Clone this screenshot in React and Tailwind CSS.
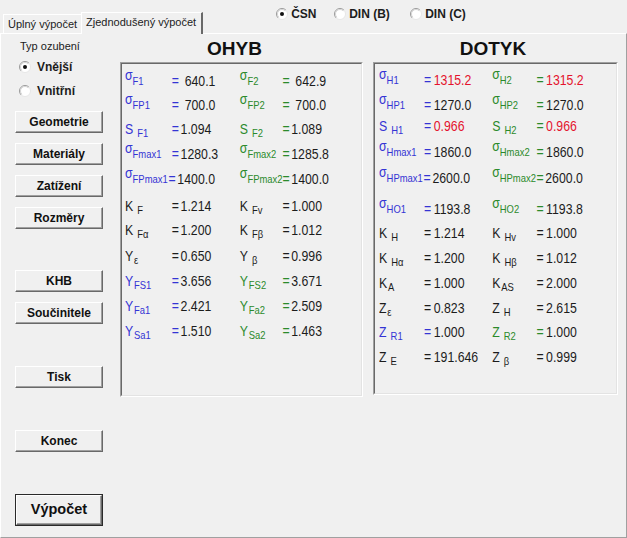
import React from "react";

const C = {
  b: "text-[#3434d4]",
  g: "text-[#2b8a2b]",
  k: "text-[#1c1c1c]",
  r: "text-[#e4132d]",
};

const L = (m, s, c, sp = true) => ({ m, s, c, sp });
const H = (l, e, v, vc = "k") => ({ l, e, v, vc });

const OHYB = [
  { mt: "", gap: "ml-[7px]", a: H(L("σ", "F1", "b"), "b", "640.1"), b: H(L("σ", "F2", "g"), "g", "642.9") },
  { mt: "mt-[4px]", gap: "ml-[7px]", a: H(L("σ", "FP1", "b"), "b", "700.0"), b: H(L("σ", "FP2", "g"), "g", "700.0") },
  { mt: "mt-[4px]", gap: "ml-[2px]", a: H(L("S", "F1", "b"), "b", "1.094"), b: H(L("S", "F2", "g"), "g", "1.089") },
  { mt: "mt-[5px]", gap: "ml-[2px]", a: H(L("σ", "Fmax1", "b"), "b", "1280.3"), b: H(L("σ", "Fmax2", "g"), "g", "1285.8") },
  { mt: "mt-[5px]", gap: "ml-[2px]", tight: true, a: H(L("σ", "FPmax1", "b"), "b", "1400.0"), b: H(L("σ", "FPmax2", "g"), "g", "1400.0") },
  { mt: "mt-[7px]", gap: "ml-[2px]", a: H(L("K", "F", "k"), "k", "1.214"), b: H(L("K", "Fv", "k"), "k", "1.000") },
  { mt: "mt-[4px]", gap: "ml-[2px]", a: H(L("K", "Fα", "k"), "k", "1.200"), b: H(L("K", "Fβ", "k"), "k", "1.012") },
  { mt: "mt-[6px]", gap: "ml-[2px]", a: H(L("Y", "ε", "k", false), "k", "0.650"), b: H(L("Y", "β", "k"), "k", "0.996") },
  { mt: "mt-[5px]", gap: "ml-[2px]", a: H(L("Y", "FS1", "b", false), "b", "3.656"), b: H(L("Y", "FS2", "g", false), "g", "3.671") },
  { mt: "mt-[5px]", gap: "ml-[2px]", a: H(L("Y", "Fa1", "b", false), "b", "2.421"), b: H(L("Y", "Fa2", "g", false), "g", "2.509") },
  { mt: "mt-[5px]", gap: "ml-[2px]", a: H(L("Y", "Sa1", "b", false), "b", "1.510"), b: H(L("Y", "Sa2", "g", false), "g", "1.463") },
];

const DOTYK = [
  { mt: "", gap: "ml-[3px]", a: H(L("σ", "H1", "b"), "b", "1315.2", "r"), b: H(L("σ", "H2", "g"), "g", "1315.2", "r") },
  { mt: "mt-[5px]", gap: "ml-[3px]", a: H(L("σ", "HP1", "b"), "b", "1270.0"), b: H(L("σ", "HP2", "g"), "g", "1270.0") },
  { mt: "mt-[1px]", gap: "ml-[3px]", a: H(L("S", "H1", "b"), "b", "0.966", "r"), b: H(L("S", "H2", "g"), "g", "0.966", "r") },
  { mt: "mt-[6px]", gap: "ml-[3px]", a: H(L("σ", "Hmax1", "b"), "b", "1860.0"), b: H(L("σ", "Hmax2", "g"), "g", "1860.0") },
  { mt: "mt-[6px]", gap: "ml-[2px]", tight: true, a: H(L("σ", "HPmax1", "b"), "b", "2600.0"), b: H(L("σ", "HPmax2", "g"), "g", "2600.0") },
  { mt: "mt-[11px]", gap: "ml-[3px]", a: H(L("σ", "HO1", "b"), "b", "1193.8"), b: H(L("σ", "HO2", "g"), "g", "1193.8") },
  { mt: "mt-[4px]", gap: "ml-[3px]", a: H(L("K", "H", "k"), "k", "1.214"), b: H(L("K", "Hv", "k"), "k", "1.000") },
  { mt: "mt-[5px]", gap: "ml-[3px]", a: H(L("K", "Hα", "k"), "k", "1.200"), b: H(L("K", "Hβ", "k"), "k", "1.012") },
  { mt: "mt-[5px]", gap: "ml-[3px]", a: H(L("K", "A", "k", false), "k", "1.000"), b: H(L("K", "AS", "k", false), "k", "2.000") },
  { mt: "mt-[5px]", gap: "ml-[3px]", a: H(L("Z", "ε", "k", false), "k", "0.823"), b: H(L("Z", "H", "k"), "k", "2.615") },
  { mt: "mt-[4px]", gap: "ml-[3px]", a: H(L("Z", "R1", "b"), "b", "1.000"), b: H(L("Z", "R2", "g"), "g", "1.000") },
  { mt: "mt-[5px]", gap: "ml-[3px]", a: H(L("Z", "E", "k"), "k", "191.646"), b: H(L("Z", "β", "k"), "k", "0.999") },
];

function Label({ l }) {
  if (l.m === "σ") {
    return (
      <span className={`whitespace-nowrap ${C[l.c]}`}>
        <span className="relative top-[-6px]">σ</span>
        <span className="relative top-[-1px] text-[11.5px]">{l.s}</span>
      </span>
    );
  }
  return (
    <span className={`whitespace-nowrap ${C[l.c]}`}>
      <span>{l.m}</span>
      <span className={`relative top-[3px] text-[11.5px] ${l.sp ? "ml-[5px]" : "ml-[1px]"}`}>{l.s}</span>
    </span>
  );
}

function Half({ h, lw, w, gap }) {
  return (
    <div className={`flex shrink-0 ${w}`}>
      <div className={`shrink-0 ${lw}`}>
        <Label l={h.l} />
      </div>
      <div className="whitespace-nowrap">
        <span className={C[h.e]}>=</span>
        <span className={`${gap} ${C[h.vc]}`}>{h.v}</span>
      </div>
    </div>
  );
}

function Panel({ rows, pad, lw1, w1, lw2, h, pt }) {
  return (
    <div className={`border border-t-[#a0a0a0] border-l-[#a0a0a0] border-r-white border-b-white ${h}`}>
      <div
        className={`h-full border border-t-[#696969] border-l-[#696969] border-r-[#e3e3e3] border-b-[#e3e3e3] ${pad} ${pt}`}
      >
        <div className="origin-left scale-x-[0.82] font-['Liberation_Sans',Arial,sans-serif] text-[15px] leading-[20px]">
          {rows.map((r, i) => (
            <div key={i} className={`flex h-[20px] ${r.mt}`}>
              <Half h={r.a} lw={r.tight ? "min-w-0 pr-[1px]" : lw1} w={w1} gap={r.gap} />
              <Half h={r.b} lw={lw2} w="w-[134px]" gap={r.gap} />
            </div>
          ))}
        </div>
      </div>
    </div>
  );
}

function Radio({ on }) {
  return (
    <svg width="12" height="12" viewBox="0 0 12 12" className="shrink-0">
      <circle cx="6" cy="6" r="5.5" fill="#ffffff" />
      <path d="M2.1 9.9 A5.5 5.5 0 0 1 9.9 2.1" fill="none" stroke="#9a9a9a" strokeWidth="1" />
      <path d="M2.8 9.2 A4.5 4.5 0 0 1 9.2 2.8" fill="none" stroke="#d4d4d4" strokeWidth="1" />
      <path d="M9.9 2.1 A5.5 5.5 0 0 1 2.1 9.9" fill="none" stroke="#e6e6e6" strokeWidth="1" />
      {on && <circle cx="6" cy="6" r="2" fill="#111111" />}
    </svg>
  );
}

function Btn({ children, mt }) {
  return (
    <div
      className={`${mt} flex h-[22px] w-[88px] items-center justify-center border border-t-white border-l-white border-r-[#696969] border-b-[#696969] bg-[#f0f0f0] shadow-[inset_-1px_-1px_0_#a0a0a0] text-[12px] font-bold text-[#111]`}
    >
      {children}
    </div>
  );
}

export default function App() {
  return (
    <div className="flex h-[538px] w-[627px] flex-col overflow-hidden bg-[#f0f0f0] font-['Liberation_Sans',Arial,sans-serif] text-[#1c1c1c]">
      {/* header with tabs and norm radios */}
      <div className="flex h-[33px] shrink-0">
        <div className="flex items-end pl-[3px]">
          <div className="flex h-[19px] items-center border-l border-t border-white pl-[4px] pr-[4px] text-[11px]">
            Úplný výpočet
          </div>
          <div className="relative z-10 mb-[-1px] flex h-[22px] items-center border-l border-t border-white border-r-2 border-r-[#696969] bg-[#f0f0f0] pl-[4px] pr-[5px] pb-[2px] text-[11px]">
            Zjednodušený výpočet
          </div>
        </div>
        <div className="ml-[73px] mt-[8px] flex h-[12px] items-center text-[12px] font-bold">
          <div className="flex w-[58px] items-center gap-[3px]">
            <Radio on />
            <span>ČSN</span>
          </div>
          <div className="flex w-[76px] items-center gap-[3px]">
            <Radio />
            <span>DIN (B)</span>
          </div>
          <div className="flex items-center gap-[3px]">
            <Radio />
            <span>DIN (C)</span>
          </div>
        </div>
      </div>

      {/* tab page */}
      <div className="flex flex-1 border border-t-white border-l-white border-r-[#a0a0a0] border-b-[#a0a0a0]">
        {/* left column */}
        <div className="flex w-[119px] shrink-0 flex-col pl-[14px]">
          <div className="ml-[5px] mt-[6px] h-[13px] text-[11px] leading-[13px]">Typ ozubení</div>
          <div className="ml-[4px] mt-[6px] flex h-[16px] items-center gap-[6px] text-[12px] font-bold">
            <Radio on />
            <span>Vnější</span>
          </div>
          <div className="ml-[4px] mt-[8px] flex h-[16px] items-center gap-[6px] text-[12px] font-bold">
            <Radio />
            <span>Vnitřní</span>
          </div>
          <Btn mt="mt-[12px]">Geometrie</Btn>
          <Btn mt="mt-[10px]">Materiály</Btn>
          <Btn mt="mt-[10px]">Zatížení</Btn>
          <Btn mt="mt-[10px]">Rozměry</Btn>
          <Btn mt="mt-[41px]">KHB</Btn>
          <Btn mt="mt-[10px]">Součinitele</Btn>
          <Btn mt="mt-[42px]">Tisk</Btn>
          <Btn mt="mt-[42px]">Konec</Btn>
          <div className="mt-[42px] h-[32px] w-[88px] border border-[#2a2a2a]">
            <div className="flex h-full items-center justify-center border border-t-white border-l-white border-r-[#696969] border-b-[#696969] shadow-[inset_-1px_-1px_0_#a0a0a0] text-[14.5px] font-bold text-[#111]">
              Výpočet
            </div>
          </div>
        </div>

        {/* panels */}
        <div className="flex gap-[10px] pt-[3px]">
          <div className="flex w-[243px] flex-col">
            <div className="flex h-[25px] items-center justify-center pr-[14px] text-[19px] font-bold text-[#111]">
              OHYB
            </div>
            <Panel rows={OHYB} pad="pl-[3px]" lw1="min-w-[57px]" w1="w-[140px]" lw2="min-w-[52px]" h="h-[335px]" pt="pt-[7px]" />
          </div>
          <div className="flex w-[245px] flex-col">
            <div className="flex h-[25px] items-center justify-center pr-[5px] text-[19px] font-bold text-[#111]">
              DOTYK
            </div>
            <Panel rows={DOTYK} pad="pl-[4px]" lw1="min-w-[55px]" w1="w-[138px]" lw2="min-w-[54px]" h="h-[333px]" pt="pt-[6px]" />
          </div>
        </div>
      </div>
    </div>
  );
}
